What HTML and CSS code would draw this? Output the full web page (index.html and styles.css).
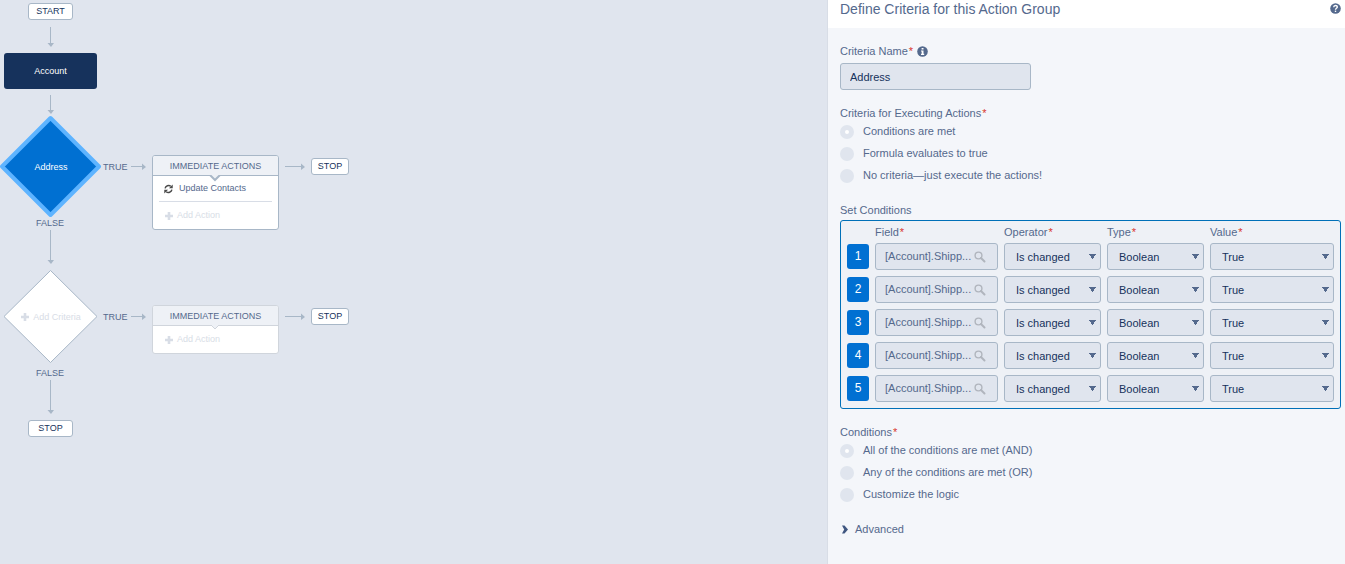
FILE: index.html
```html
<!DOCTYPE html>
<html lang="en">
<head>
<meta charset="utf-8">
<title>Process Builder</title>
<link rel="stylesheet" href="styles.css">
</head>
<body>
<svg class="sprite" width="0" height="0" aria-hidden="true">
  <symbol id="plus" viewBox="0 0 8 8"><path d="M2.700 0h2.600v2.700H8v2.600H5.300V8H2.700V5.300H0V2.700h2.700z"/></symbol>
  <symbol id="search" viewBox="0 0 12 12"><circle cx="4.500" cy="4.500" r="3.400" fill="none" stroke="currentColor" stroke-width="1.400"/><path d="M7 7l3.500 3.500" stroke="currentColor" stroke-width="2" stroke-linecap="round"/></symbol>
  <symbol id="refresh" viewBox="0 0 10 10"><path d="M1.200 4.300A4 4 0 0 1 7.600 2M8.800 5.700A4 4 0 0 1 2.400 8" fill="none" stroke="currentColor" stroke-width="1.600"/><path d="M9.700 0v4.200H5.500zM.3 10V5.800h4.200z"/></symbol>
</svg>
<div class="app">
  <main class="canvas">
    <svg class="wires" width="360" height="440" aria-hidden="true">
      <g class="wire">
        <path d="M50.500 27v16M50.500 95v16M50.500 230v31M50.500 380v31M131 166.500h11M131 316.500h11M285 166.500h16M285 316.500h16"/>
      </g>
      <g class="wire-head">
        <path d="M47.500 43h6.500l-3 4zM47.500 110h6.500l-3 4zM47.500 260h6.500l-3 4zM47.500 410h6.500l-3 4zM142 163.500v6.500l4-3zM142 313.500v6.500l4-3zM301 163.500v6.500l4-3zM301 313.500v6.500l4-3z"/>
      </g>
      <path class="diamond-active" d="M50.500 118L99 166.500L50.500 215L2 166.500Z"/>
      <path class="diamond-empty" d="M50.500 270.500L97 316.500L50.500 362.500L4 316.500Z"/>
    </svg>
    <div class="node terminal start">START</div>
    <button class="node object" type="button">Account</button>
    <button class="node criteria criteria-active" type="button">Address</button>
    <div class="node branch true-1">TRUE</div>
    <div class="node branch false-1">FALSE</div>
    <section class="node group group-1">
      <h2 class="group-title">IMMEDIATE ACTIONS</h2>
      <svg class="notch" width="12" height="7" aria-hidden="true"><path d="M1 0L6 5L11 0"/></svg>
      <button class="action" type="button"><svg class="action-icon" width="9" height="10"><use href="#refresh"/></svg>Update Contacts</button>
      <button class="add" type="button"><svg width="8" height="8"><use href="#plus"/></svg>Add Action</button>
    </section>
    <div class="node terminal stop-1">STOP</div>
    <button class="node criteria criteria-empty" type="button"><svg width="8" height="8"><use href="#plus"/></svg>Add Criteria</button>
    <div class="node branch true-2">TRUE</div>
    <div class="node branch false-2">FALSE</div>
    <section class="node group group-2">
      <h2 class="group-title">IMMEDIATE ACTIONS</h2>
      <svg class="notch" width="12" height="7" aria-hidden="true"><path d="M2 0L6 4L10 0"/></svg>
      <button class="add" type="button"><svg width="8" height="8"><use href="#plus"/></svg>Add Action</button>
    </section>
    <div class="node terminal stop-2">STOP</div>
    <div class="node terminal stop-3">STOP</div>
  </main>

  <aside class="panel">
    <header class="panel-head">
      <h1 class="panel-title">Define Criteria for this Action Group</h1>
      <button class="icon-button" type="button" aria-label="Help"><svg width="11" height="11" viewBox="0 0 11 11"><circle cx="5.500" cy="5.500" r="5.300" fill="#54698d"/><path d="M3.700 4.300C3.700 1.900 7.400 2 7.300 4.100C7.200 5.300 5.500 5.200 5.500 6.800" fill="none" stroke="#fff" stroke-width="1.400"/><path d="M4.800 7.600h1.400V9H4.800z" fill="#fff"/></svg></button>
    </header>
    <form class="panel-body">
      <div class="field">
        <div class="label-row">
          <label class="label" for="name">Criteria Name<span class="req">*</span></label>
          <svg width="11" height="11" viewBox="0 0 11 11" role="img" aria-label="Info"><circle cx="5.500" cy="5.500" r="5.300" fill="#54698d"/><path d="M4.600 2h1.900v1.500H4.600zM4 4.400h2.500v3.300h.7v1.200H4V7.700h.7V5.600H4z" fill="#fff"/></svg>
        </div>
        <input class="control name" id="name" type="text" value="Address">
      </div>

      <fieldset class="choices">
        <legend class="label">Criteria for Executing Actions<span class="req">*</span></legend>
        <label class="choice"><input type="radio" name="exec" checked><span>Conditions are met</span></label>
        <label class="choice"><input type="radio" name="exec"><span>Formula evaluates to true</span></label>
        <label class="choice"><input type="radio" name="exec"><span>No criteria—just execute the actions!</span></label>
      </fieldset>

      <section class="conditions">
        <h2 class="label">Set Conditions</h2>
        <div class="rows">
          <div class="row row-head">
            <span></span>
            <span class="label" id="h-field">Field<span class="req">*</span></span>
            <span class="label" id="h-op">Operator<span class="req">*</span></span>
            <span class="label" id="h-type">Type<span class="req">*</span></span>
            <span class="label" id="h-value">Value<span class="req">*</span></span>
          </div>
          <div class="row">
            <span class="index">1</span>
            <button class="control lookup" type="button"><span>[Account].Shipp...</span><svg width="12" height="12"><use href="#search"/></svg></button>
            <select class="control" aria-labelledby="h-op"><option>Is changed</option></select>
            <select class="control" aria-labelledby="h-type"><option>Boolean</option></select>
            <select class="control" aria-labelledby="h-value"><option>True</option></select>
          </div>
          <div class="row">
            <span class="index">2</span>
            <button class="control lookup" type="button"><span>[Account].Shipp...</span><svg width="12" height="12"><use href="#search"/></svg></button>
            <select class="control" aria-labelledby="h-op"><option>Is changed</option></select>
            <select class="control" aria-labelledby="h-type"><option>Boolean</option></select>
            <select class="control" aria-labelledby="h-value"><option>True</option></select>
          </div>
          <div class="row">
            <span class="index">3</span>
            <button class="control lookup" type="button"><span>[Account].Shipp...</span><svg width="12" height="12"><use href="#search"/></svg></button>
            <select class="control" aria-labelledby="h-op"><option>Is changed</option></select>
            <select class="control" aria-labelledby="h-type"><option>Boolean</option></select>
            <select class="control" aria-labelledby="h-value"><option>True</option></select>
          </div>
          <div class="row">
            <span class="index">4</span>
            <button class="control lookup" type="button"><span>[Account].Shipp...</span><svg width="12" height="12"><use href="#search"/></svg></button>
            <select class="control" aria-labelledby="h-op"><option>Is changed</option></select>
            <select class="control" aria-labelledby="h-type"><option>Boolean</option></select>
            <select class="control" aria-labelledby="h-value"><option>True</option></select>
          </div>
          <div class="row">
            <span class="index">5</span>
            <button class="control lookup" type="button"><span>[Account].Shipp...</span><svg width="12" height="12"><use href="#search"/></svg></button>
            <select class="control" aria-labelledby="h-op"><option>Is changed</option></select>
            <select class="control" aria-labelledby="h-type"><option>Boolean</option></select>
            <select class="control" aria-labelledby="h-value"><option>True</option></select>
          </div>
        </div>
      </section>

      <fieldset class="choices">
        <legend class="label">Conditions<span class="req">*</span></legend>
        <label class="choice"><input type="radio" name="logic" checked><span>All of the conditions are met (AND)</span></label>
        <label class="choice"><input type="radio" name="logic"><span>Any of the conditions are met (OR)</span></label>
        <label class="choice"><input type="radio" name="logic"><span>Customize the logic</span></label>
      </fieldset>

      <button class="advanced" type="button"><svg width="8" height="9" viewBox="0 0 8 9" aria-hidden="true"><path d="M2 .5h2.500L8 4.500L4.500 8.500H2L4.200 4.500z" fill="#3f5680"/></svg>Advanced</button>
    </form>
  </aside>
</div>
</body>
</html>
```
FILE: styles.css
```css
* {
  box-sizing: border-box;
}

body {
  margin: 0;
  font-family: "Liberation Sans", Arial, sans-serif;
  font-size: 11px;
  line-height: 15px;
  color: #54698d;
}

h1,
h2 {
  margin: 0;
  font-weight: 400;
}

button,
input,
select {
  margin: 0;
  padding: 0;
  font: inherit;
  color: inherit;
}

button {
  border: 0;
  background: none;
  cursor: pointer;
}

svg {
  display: block;
  flex: none;
  fill: currentColor;
}

.sprite {
  position: absolute;
}

.app {
  display: grid;
  grid-template-columns: 827fr 518fr;
  min-height: 100vh;
}

/* Flow canvas */
.canvas {
  position: relative;
  background: #e0e5ee;
  font-size: 9px;
}

.wires {
  position: absolute;
  top: 0;
  left: 0;
}

.wire {
  fill: none;
  stroke: #a8b7c7;
}

.wire-head {
  fill: #a8b7c7;
}

.diamond-active {
  fill: #0070d2;
  stroke: #5eb4ff;
  stroke-width: 4;
  stroke-linejoin: round;
}

.diamond-empty {
  fill: #fff;
  stroke: #a8b7c7;
  stroke-linejoin: round;
}

.node {
  position: absolute;
}

.terminal {
  width: 38px;
  border: 1px solid #a8b7c7;
  border-radius: 3px;
  background: #fff;
  color: #16325c;
  text-align: center;
}

.start,
.stop-3 {
  left: 28px;
  width: 45px;
}

.start { top: 3px; }
.stop-3 { top: 420px; }
.stop-1 { left: 311px; top: 158px; }
.stop-2 { left: 311px; top: 308px; }

.object {
  left: 4px;
  top: 53px;
  width: 93px;
  height: 36px;
  border-radius: 3px;
  background: #16325c;
  color: #fff;
}

.criteria {
  display: flex;
  align-items: center;
  justify-content: center;
  gap: 4px;
  left: 4px;
  width: 94px;
  height: 94px;
  clip-path: polygon(50% 0, 100% 50%, 50% 100%, 0 50%);
}

.criteria-active {
  top: 120px;
  color: #fff;
}

.criteria-empty {
  top: 270px;
  color: #d8dde6;
}

.branch { line-height: 12px; }
.true-1 { left: 103px; top: 161px; }
.true-2 { left: 103px; top: 311px; }
.false-1 { left: 36px; top: 217px; }
.false-2 { left: 36px; top: 367px; }

.group {
  width: 127px;
  border: 1px solid #a8b7c7;
  border-radius: 3px;
  background: #fff;
}

.group-1 {
  left: 152px;
  top: 155px;
}

.group-2 {
  left: 152px;
  top: 305px;
  border-color: #d0d5dc;
}

.group-title {
  padding-top: 1px;
  border-bottom: 1px solid #a8b7c7;
  border-radius: 2px 2px 0 0;
  background: #eef1f6;
  font-size: 9px;
  line-height: 18px;
  text-align: center;
}

.group-2 .group-title {
  border-color: #d0d5dc;
}

.notch {
  position: absolute;
  top: 19px;
  left: 56px;
  fill: #eef1f6;
  stroke: #a8b7c7;
  stroke-width: 2;
}

.group-2 .notch {
  stroke: #d0d5dc;
  stroke-width: 1;
}

.action,
.add {
  display: flex;
  align-items: center;
  gap: 4px;
  height: 27px;
  padding-left: 12px;
}

.action {
  width: 113px;
  height: 26px;
  margin: 0 6px;
  padding-left: 5px;
  gap: 6px;
  border-bottom: 1px solid #d8dde6;
}

.action-icon {
  color: #4a4a4a;
}

.add {
  color: #d8dde6;
}

/* Side panel */
.panel {
  border-left: 1px solid #d8dde6;
  background: #f4f6fa;
}

.panel-head {
  display: flex;
  align-items: flex-start;
  justify-content: space-between;
  padding: 1px 4px 11px 12px;
  background: #fff;
}

.panel-title {
  font-size: 14px;
  line-height: 16px;
}

.icon-button {
  padding-top: 2px;
}

.panel-body {
  display: flex;
  flex-direction: column;
  gap: 16px;
  padding: 16px 4px 16px 12px;
}

.label {
  display: block;
  padding: 0;
  font-size: 11px;
}

.req {
  padding-left: 1px;
  color: #d9362f;
}

.field {
  display: grid;
  gap: 4px;
}

.label-row {
  display: flex;
  align-items: center;
  gap: 4px;
}

.control {
  width: 100%;
  min-width: 0;
  height: 27px;
  padding: 0 10px;
  border: 1px solid #a8b7c7;
  border-radius: 3px;
  background-color: #e0e5ee;
  color: #16325c;
}

.name {
  width: 191px;
  padding: 0 9px;
}

.choices {
  margin: 0;
  padding: 0;
  border: 0;
}

.choice {
  display: flex;
  align-items: center;
  gap: 9px;
  height: 22px;
}

.choice span {
  padding-bottom: 2px;
}

.choice input {
  appearance: none;
  width: 14px;
  height: 14px;
  border-radius: 50%;
  background: #e0e5ee;
}

.choice input:checked {
  border: 5px solid #e0e5ee;
  background: #fff;
}

.conditions {
  display: grid;
  gap: 2px;
}

.rows {
  display: grid;
  gap: 6px;
  padding: 4px 6px 6px;
  border: 1px solid #0070b8;
  border-radius: 3px;
  background: #eef1f6;
}

.row {
  display: grid;
  grid-template-columns: 22px 123fr 97fr 97fr 124fr;
  align-items: center;
  gap: 6px;
}

.row-head {
  height: 12px;
}

.index {
  border-radius: 3px;
  background: #0070d2;
  color: #fff;
  font-size: 12px;
  line-height: 25px;
  text-align: center;
}

.lookup {
  display: flex;
  align-items: center;
  justify-content: space-between;
  padding: 0 11px 0 9px;
  color: #54698d;
}

.lookup svg {
  color: #b0b5bd;
}

select.control {
  appearance: none;
  padding: 2px 10px 0 11px;
  background-image: conic-gradient(from -37deg at 50% 100%, #54698d 74deg, transparent 0);
  background-position: right 4px center;
  background-repeat: no-repeat;
  background-size: 7px 5px;
}

.advanced {
  display: flex;
  align-items: center;
  align-self: flex-start;
  gap: 7px;
}
```
